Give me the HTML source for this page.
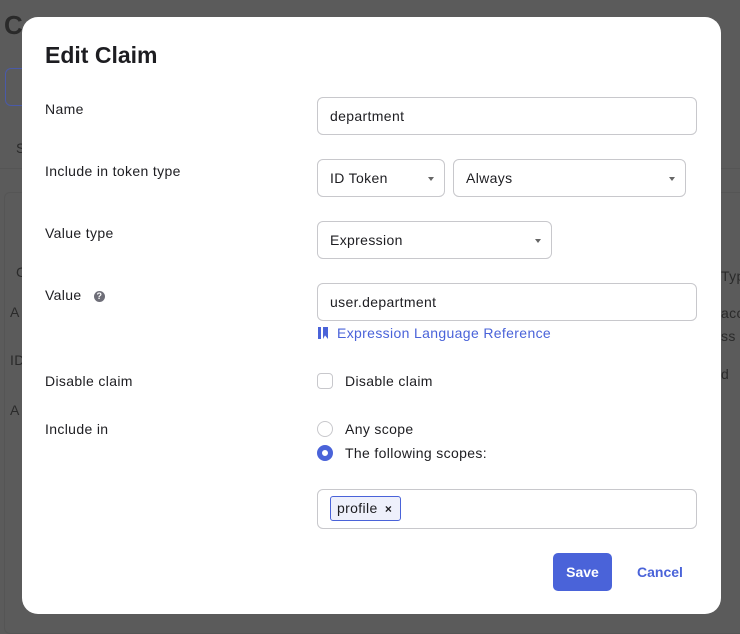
<!DOCTYPE html><html><head><style>
body{margin:0;width:740px;height:633px;background:#5b5b5b;font-family:"Liberation Sans",Arial,sans-serif;font-size:14px;letter-spacing:0.35px;color:#1d1d21;position:relative;overflow:hidden}
.a{position:absolute}
.bg{color:#2a2a2a}
.m{left:22px;top:17px;width:699px;height:597px;background:#fff;border-radius:16px}
.lbl{left:45px;font-size:14px}
.in{border:1px solid #c8c8cc;border-radius:6px;background:#fff;box-sizing:border-box;height:38px;padding:0 12px;line-height:36px}
.sel:after{content:"";position:absolute;right:10px;top:17px;border-left:3px solid transparent;border-right:3px solid transparent;border-top:4px solid #666}
.cb{width:16px;height:16px;border:1px solid #c8c8cc;border-radius:4px;box-sizing:border-box}
.rd{width:16px;height:16px;border:1px solid #c8c8cc;border-radius:50%;box-sizing:border-box}
</style></head><body>
<div class="a bg" style="left:4px;top:10px;font-size:26px;font-weight:bold">C</div>
<div class="a" style="left:5px;top:68px;width:30px;height:36px;border:1px solid #4a5aa8;border-radius:6px"></div>
<div class="a" style="left:0;top:168px;width:740px;height:1px;background:#555"></div>
<div class="a" style="left:4px;top:192px;width:740px;height:440px;border:1px solid #555;border-radius:6px"></div>
<div class="a bg" style="left:16px;top:140px">S</div>
<div class="a bg" style="left:16px;top:264px">C</div>
<div class="a bg" style="left:10px;top:304px">A</div>
<div class="a bg" style="left:10px;top:352px">ID</div>
<div class="a bg" style="left:10px;top:402px">A</div>
<div class="a bg" style="left:721px;top:268px">Typ</div>
<div class="a bg" style="left:721px;top:305px">acc</div>
<div class="a bg" style="left:721px;top:328px">ss</div>
<div class="a bg" style="left:721px;top:366px">d</div>
<div class="a m"></div>
<div class="a" style="left:45px;top:42px;font-size:23px;font-weight:bold;color:#1d1d21;letter-spacing:0">Edit Claim</div>
<div class="a lbl" style="top:101px">Name</div>
<div class="a lbl" style="top:163px">Include in token type</div>
<div class="a lbl" style="top:225px">Value type</div>
<div class="a lbl" style="top:287px">Value <span style="display:inline-block;width:11px;height:11px;border-radius:50%;background:#6e6e78;color:#fff;font-size:9px;line-height:11px;text-align:center;font-weight:bold;margin-left:8px;vertical-align:1px;letter-spacing:0">?</span></div>
<div class="a lbl" style="top:373px">Disable claim</div>
<div class="a lbl" style="top:421px">Include in</div>
<div class="a in" style="left:317px;top:97px;width:380px">department</div>
<div class="a in sel" style="left:317px;top:159px;width:128px">ID Token</div>
<div class="a in sel" style="left:453px;top:159px;width:233px">Always</div>
<div class="a in sel" style="left:317px;top:221px;width:235px">Expression</div>
<div class="a in" style="left:317px;top:283px;width:380px">user.department</div>
<div class="a" style="left:318px;top:325px;color:#4a63d9"><span style="display:inline-block;width:10px;height:12px;background:#4a63d9;margin-right:9px;vertical-align:-1px;clip-path:polygon(0 0,100% 0,100% 100%,70% 70%,50% 100%,50% 0,30% 0,30% 100%,0 100%)"></span>Expression Language Reference</div>
<div class="a cb" style="left:317px;top:373px"></div>
<div class="a" style="left:345px;top:373px">Disable claim</div>
<div class="a rd" style="left:317px;top:421px"></div>
<div class="a" style="left:345px;top:421px">Any scope</div>
<div class="a rd" style="left:317px;top:445px;border:5px solid #4a63d9"></div>
<div class="a" style="left:345px;top:445px">The following scopes:</div>
<div class="a in" style="left:317px;top:489px;width:380px;height:40px"></div>
<div class="a" style="left:330px;top:496px;width:71px;height:25px;box-sizing:border-box;border:1px solid #4a63d9;border-radius:3px;background:#eef0fb;line-height:23px;padding-left:6px">profile <b style="margin-left:3px;font-size:12px">×</b></div>
<div class="a" style="left:553px;top:553px;width:59px;height:38px;background:#4a63d9;border-radius:5px;color:#fff;font-weight:bold;text-align:center;line-height:38px;letter-spacing:0">Save</div>
<div class="a" style="left:637px;top:564px;color:#4a63d9;font-weight:bold;letter-spacing:0">Cancel</div>
</body></html>
